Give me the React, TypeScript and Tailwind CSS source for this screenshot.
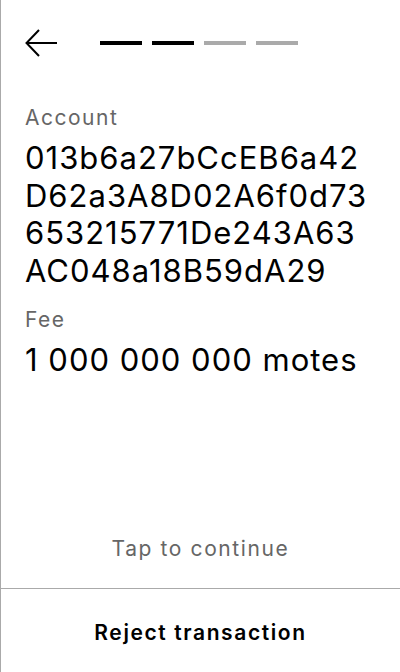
const steps = [true, true, false, false];

function BackArrow() {
  return (
    <svg width="32" height="32" viewBox="0 0 32 32" fill="none" stroke="black" strokeWidth="2">
      <path d="M1.5 16H32" />
      <path d="M14 3L1.5 16L14 29" />
    </svg>
  );
}

export default function App() {
  return (
    <div
      className="flex flex-col h-[672px] w-[400px] bg-white border-l border-[#aaaaaa] text-black"
      style={{ fontFamily: "Inter, 'Noto Sans', sans-serif" }}
    >
      <div className="flex items-center pl-6 pt-[27px]">
        <BackArrow />
        <div className="flex gap-[10px] ml-[43px]">
          {steps.map((done, i) => (
            <div key={i} className={`w-[42px] h-[4px] ${done ? "bg-black" : "bg-[#aaaaaa]"}`} />
          ))}
        </div>
      </div>

      <div className="px-6 mt-[45px]">
        <div className="text-[21px] leading-[28px] tracking-[1.5px] text-[#666666]">Account</div>
        <div className="mt-[7px] text-[31px] leading-[37.5px] tracking-[1px]">
          <div>013b6a27bCcEB6a42</div>
          <div>D62a3A8D02A6f0d73</div>
          <div>653215771De243A63</div>
          <div>AC048a18B59dA29</div>
        </div>
        <div className="mt-[17px] text-[21px] leading-[28px] tracking-[1.5px] text-[#666666]">Fee</div>
        <div className="mt-[7px] text-[31px] leading-[37.5px] tracking-[1px]">1 000 000 000 motes</div>
      </div>

      <div className="flex-1" />

      <div className="pb-[25px] text-center text-[21px] leading-[28px] tracking-[1.6px] text-[#666666]">
        Tap to continue
      </div>
      <div className="border-t border-[#aaaaaa] h-[84px] pt-[30px] text-center text-[21px] leading-[28px] tracking-[1.6px] font-semibold">
        Reject transaction
      </div>
    </div>
  );
}
